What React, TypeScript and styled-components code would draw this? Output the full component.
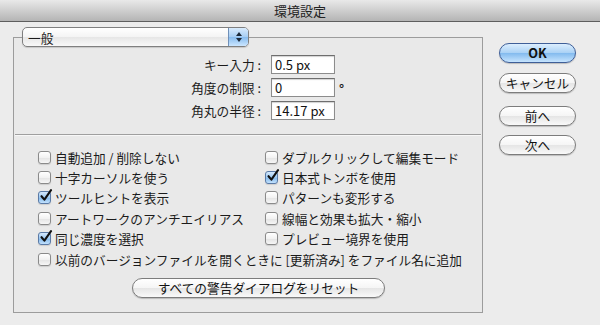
import styled, { createGlobalStyle } from "styled-components";

const GlobalStyle = createGlobalStyle`
  html, body {
    margin: 0;
    padding: 0;
    background: #ececec;
  }
  body {
    font-family: "Noto Sans CJK JP", "DejaVu Sans", sans-serif;
    font-size: 12.7px;
    color: #1b1b1b;
  }
`;

type Field = { label: string; value: string; unit?: string };
type Option = { label: string; checked: boolean; wide?: boolean };

const fields: Field[] = [
  { label: "キー入力 :", value: "0.5 px" },
  { label: "角度の制限 :", value: "0", unit: "°" },
  { label: "角丸の半径 :", value: "14.17 px" },
];

// left column, right column, left column ... (grid order)
const options: Option[] = [
  { label: "自動追加 / 削除しない", checked: false },
  { label: "ダブルクリックして編集モード", checked: false },
  { label: "十字カーソルを使う", checked: false },
  { label: "日本式トンボを使用", checked: true },
  { label: "ツールヒントを表示", checked: true },
  { label: "パターンも変形する", checked: false },
  { label: "アートワークのアンチエイリアス", checked: false },
  { label: "線幅と効果も拡大・縮小", checked: false },
  { label: "同じ濃度を選択", checked: true },
  { label: "プレビュー境界を使用", checked: false },
  { label: "以前のバージョンファイルを開くときに [更新済み] をファイル名に追加", checked: false, wide: true },
];

const CheckBox = ({ checked }: { checked: boolean }) => (
  <BoxStyled $checked={checked}>
    {checked && (
      <svg width="14" height="14" viewBox="0 0 14 14">
        <path
          d="M2.5 7.2 L5.4 10.6 L12 1.2"
          fill="none"
          stroke="#111"
          strokeWidth="2.1"
          strokeLinecap="round"
          strokeLinejoin="round"
        />
      </svg>
    )}
  </BoxStyled>
);

export default function App() {
  return (
    <>
      <GlobalStyle />
      <Window>
        <TitleBar>環境設定</TitleBar>
        <Body>
          <Main>
            <Popup>
              <PopupLabel>一般</PopupLabel>
              <PopupArrows>
                <svg width="8" height="12" viewBox="0 0 8 12">
                  <path d="M4 1 L7 5 L1 5 Z" fill="#1d2a3a" />
                  <path d="M4 11 L7 7 L1 7 Z" fill="#1d2a3a" />
                </svg>
              </PopupArrows>
            </Popup>
            <Panel>
              <Fields>
                {fields.map((f) => (
                  <FieldRow key={f.label}>
                    <FieldLabel>{f.label}</FieldLabel>
                    <TextInput readOnly value={f.value} />
                    <Unit>{f.unit}</Unit>
                  </FieldRow>
                ))}
              </Fields>
              <Separator />
              <Options>
                {options.map((o) => (
                  <OptionRow key={o.label} $wide={o.wide}>
                    <CheckBox checked={o.checked} />
                    <span>{o.label}</span>
                  </OptionRow>
                ))}
              </Options>
              <ResetRow>
                <AquaButton $width={253}>すべての警告ダイアログをリセット</AquaButton>
              </ResetRow>
            </Panel>
          </Main>
          <Side>
            <AquaButton $width={77} $primary>
              OK
            </AquaButton>
            <AquaButton $width={77} $gap={10}>
              キャンセル
            </AquaButton>
            <AquaButton $width={77} $gap={13}>
              前へ
            </AquaButton>
            <AquaButton $width={77} $gap={9}>
              次へ
            </AquaButton>
          </Side>
        </Body>
      </Window>
    </>
  );
}

//style
const Window = styled.div`
  width: 600px;
  height: 325px;
  display: flex;
  flex-direction: column;
  background: #ececec;
  overflow: hidden;
`;

const TitleBar = styled.div`
  height: 21px;
  flex: none;
  display: flex;
  align-items: center;
  justify-content: center;
  background: linear-gradient(#e9e9e9, #c9c9c9 60%, #b4b4b4);
  border-bottom: 1px solid #5e5e5e;
  font-size: 13px;
  color: #222;
`;

const Body = styled.div`
  display: flex;
  padding: 5px 0 0 13px;
`;

const Main = styled.div`
  width: 470px;
  display: flex;
  flex-direction: column;
`;

const Popup = styled.div`
  position: relative;
  z-index: 1;
  margin-left: 9px;
  width: 227px;
  height: 20px;
  box-sizing: border-box;
  display: flex;
  border: 1px solid #7f7f7f;
  border-radius: 5px;
  background: linear-gradient(#ffffff, #f4f4f4 50%, #e6e6e6 51%, #f8f8f8);
  box-shadow: 0 1px 1px rgba(0, 0, 0, 0.15);
  overflow: hidden;
`;

const PopupLabel = styled.div`
  flex: 1;
  display: flex;
  align-items: center;
  padding-left: 5px;
`;

const PopupArrows = styled.div`
  width: 19px;
  display: flex;
  align-items: center;
  justify-content: center;
  border-left: 1px solid #6f8fb8;
  background: linear-gradient(#d8ebfd, #a6cdf3 50%, #86bbee 51%, #cbe6ff);
`;

const Panel = styled.div`
  margin-top: -10px;
  height: 276px;
  box-sizing: border-box;
  border: 1px solid #9c9c9c;
  background: #e9e9e9;
  display: flex;
  flex-direction: column;
`;

const Fields = styled.div`
  display: flex;
  flex-direction: column;
  gap: 4px;
  padding-top: 17px;
`;

const FieldRow = styled.div`
  display: grid;
  grid-template-columns: 247px 64px 20px;
  column-gap: 10px;
  align-items: center;
  height: 19px;
`;

const FieldLabel = styled.div`
  text-align: right;
  white-space: nowrap;
`;

const TextInput = styled.input`
  width: 64px;
  height: 19px;
  box-sizing: border-box;
  margin: 0;
  padding: 0 3px;
  border: 1px solid #8c8c8c;
  border-top-color: #6e6e6e;
  background: #fff;
  box-shadow: inset 0 1px 1px rgba(0, 0, 0, 0.18);
  font-family: inherit;
  font-size: 13px;
  color: #111;
  outline: none;
`;

const Unit = styled.span`
  margin-left: -6px;
  align-self: start;
  padding-top: 5px;
  line-height: 12px;
  font-weight: 700;
`;

const Separator = styled.div`
  height: 1px;
  margin: 14px 1px 12px;
  background: #9f9f9f;
  box-shadow: 0 1px 0 #f7f7f7;
`;

const Options = styled.div`
  display: grid;
  grid-template-columns: 227px 1fr;
  grid-auto-rows: 20.4px;
  padding-left: 24px;
`;

const OptionRow = styled.label<{ $wide?: boolean }>`
  display: flex;
  align-items: center;
  gap: 4px;
  white-space: nowrap;
  grid-column: ${(p) => (p.$wide ? "1 / span 2" : "auto")};
`;

const BoxStyled = styled.span<{ $checked: boolean }>`
  position: relative;
  width: 13px;
  height: 13px;
  flex: none;
  box-sizing: border-box;
  border: 1px solid ${(p) => (p.$checked ? "#5a7aa6" : "#8a8a8a")};
  border-radius: 3px;
  background: ${(p) =>
    p.$checked
      ? "linear-gradient(#d4e8fc, #9dcaf3 50%, #83b9ec 51%, #c2e1fd)"
      : "linear-gradient(#ffffff, #f2f2f2 50%, #e3e3e3 51%, #f6f6f6)"};
  box-shadow: 0 1px 1px rgba(0, 0, 0, 0.12);

  svg {
    position: absolute;
    left: 0;
    top: -3px;
  }
`;

const ResetRow = styled.div`
  display: flex;
  padding: 9px 0 0 118px;
`;

const Side = styled.div`
  display: flex;
  flex-direction: column;
  margin-left: 16px;
  padding-top: 16px;
`;

const AquaButton = styled.button<{ $width: number; $primary?: boolean; $gap?: number }>`
  width: ${(p) => p.$width}px;
  height: 20px;
  margin: ${(p) => p.$gap ?? 0}px 0 0;
  padding: 0;
  box-sizing: border-box;
  border: 1px solid ${(p) => (p.$primary ? "#3f5f98" : "#7c7c7c")};
  border-radius: 10px;
  background: ${(p) =>
    p.$primary
      ? "linear-gradient(#dceefe, #a9d1f5 50%, #82baee 51%, #c6e4fe)"
      : "linear-gradient(#ffffff, #f5f5f5 50%, #e5e5e5 51%, #f9f9f9)"};
  box-shadow: 0 1px 1px rgba(0, 0, 0, 0.2);
  font-family: inherit;
  font-size: 12.7px;
  font-weight: ${(p) => (p.$primary ? 700 : 400)};
  color: #111;
  line-height: 18px;
`;
